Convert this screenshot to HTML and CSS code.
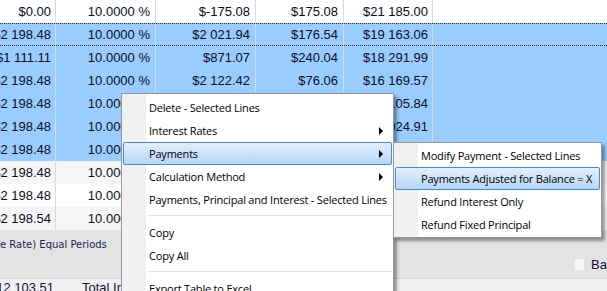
FILE: index.html
```html
<!DOCTYPE html>
<html lang="en">
<head>
    <meta charset="UTF-8">
    <title>Loan Schedule</title>
    <link rel="stylesheet" href="styles.css">
</head>
<body>
    <div class="grid">
        <div class="row"><div class="c c1">$0.00</div><div class="c c2">10.0000 %</div><div class="c c3">$-175.08</div><div class="c c4">$175.08</div><div class="c c5">$21 185.00</div><div class="c fill"></div></div>
        <div class="row sel focus"><div class="c c1">$2 198.48</div><div class="c c2">10.0000 %</div><div class="c c3">$2 021.94</div><div class="c c4">$176.54</div><div class="c c5">$19 163.06</div><div class="c fill"></div></div>
        <div class="row sel"><div class="c c1">$1 111.11</div><div class="c c2">10.0000 %</div><div class="c c3">$871.07</div><div class="c c4">$240.04</div><div class="c c5">$18 291.99</div><div class="c fill"></div></div>
        <div class="row sel"><div class="c c1">$2 198.48</div><div class="c c2">10.0000 %</div><div class="c c3">$2 122.42</div><div class="c c4">$76.06</div><div class="c c5">$16 169.57</div><div class="c fill"></div></div>
        <div class="row sel"><div class="c c1">$2 198.48</div><div class="c c2">10.0000 %</div><div class="c c3">$2 063.73</div><div class="c c4">$134.75</div><div class="c c5">$14 105.84</div><div class="c fill"></div></div>
        <div class="row sel"><div class="c c1">$2 198.48</div><div class="c c2">10.0000 %</div><div class="c c3">$2 080.93</div><div class="c c4">$117.55</div><div class="c c5">$12 024.91</div><div class="c fill"></div></div>
        <div class="row sel"><div class="c c1">$2 198.48</div><div class="c c2">10.0000 %</div><div class="c c3">$2 098.27</div><div class="c c4">$100.21</div><div class="c c5">$9 926.64</div><div class="c fill"></div></div>
        <div class="row"><div class="c c1">$2 198.48</div><div class="c c2">10.0000 %</div><div class="c c3">$2 115.76</div><div class="c c4">$82.72</div><div class="c c5">$7 810.88</div><div class="c fill"></div></div>
        <div class="row"><div class="c c1">$2 198.48</div><div class="c c2">10.0000 %</div><div class="c c3">$2 133.39</div><div class="c c4">$65.09</div><div class="c c5">$5 677.49</div><div class="c fill"></div></div>
        <div class="row"><div class="c c1">$2 198.54</div><div class="c c2">10.0000 %</div><div class="c c3">$2 151.23</div><div class="c c4">$47.31</div><div class="c c5">$3 526.26</div><div class="c fill"></div></div>
    </div>

    <div class="summary">
        <span class="method">e Rate) Equal Periods</span>
        <label class="check"><span class="box"></span>Ba</label>
    </div>
    <div class="totals">
        <span class="total-val">$12 103.51</span>
        <span class="total-lbl">Total Int</span>
    </div>

    <div class="menu main-menu">
        <div class="item">Delete - Selected Lines</div>
        <div class="item">Interest Rates<span class="arrow"></span></div>
        <div class="item hot">Payments<span class="arrow"></span></div>
        <div class="item">Calculation Method<span class="arrow"></span></div>
        <div class="item">Payments, Principal and Interest - Selected Lines</div>
        <div class="sep"></div>
        <div class="item">Copy</div>
        <div class="item">Copy All</div>
        <div class="sep"></div>
        <div class="item">Export Table to Excel...</div>
    </div>

    <div class="menu sub-menu">
        <div class="item">Modify Payment - Selected Lines</div>
        <div class="item hot">Payments Adjusted for Balance = X</div>
        <div class="item">Refund Interest Only</div>
        <div class="item">Refund Fixed Principal</div>
    </div>
</body>
</html>
```

FILE: styles.css
```css
body {
    margin: 0;
    width: 607px;
    height: 291px;
    overflow: hidden;
    position: relative;
    font-family: "Liberation Sans", Arial, sans-serif;
    font-size: 13px;
    color: #0c0c1e;
    background: #f0f0f0;
}
.grid {
    background: #fff;
}
.row {
    display: flex;
    height: 23px;
    line-height: 23px;
}
.row:nth-child(even) {
    background: #f5f5f5;
}
.row.sel {
    background: #99ccff;
}
.row.focus {
    border-top: 1px dotted #3a2a1a;
    border-bottom: 1px dotted #3a2a1a;
    height: 21px;
    line-height: 21px;
}
.c {
    box-sizing: border-box;
    flex: none;
    display: flex;
    justify-content: flex-end;
    padding-right: 5px;
    border-right: 1px solid #d9d9d9;
    white-space: nowrap;
}
.c1 { width: 56px; padding-right: 4px; }
.c2 { width: 100px; }
.c3 { width: 100px; }
.c4 { width: 88px; }
.c5 { width: 89px; padding-right: 4px; }
.fill {
    flex: 1;
    border-right: 0;
}
.summary {
    display: flex;
    justify-content: space-between;
    height: 48px;
    background: #e3e3e3;
}
.method {
    font-family: "DejaVu Sans", Verdana, sans-serif;
    font-size: 10px;
    color: #23235a;
    padding-top: 8px;
    line-height: 14px;
    white-space: nowrap;
}
.check {
    align-self: flex-end;
    display: flex;
    align-items: center;
    gap: 7px;
    padding-bottom: 6px;
    color: #10103a;
    white-space: nowrap;
    width: 32px;
}
.box {
    width: 11px;
    height: 11px;
    background: #f8f7f3;
}
.totals {
    display: flex;
    gap: 28px;
    border-top: 1px solid #d8d8d8;
    background: #f0f0f0;
    line-height: 16px;
    padding-top: 1px;
    color: #10103a;
    white-space: nowrap;
}
.total-val {
    width: 54px;
    display: flex;
    justify-content: flex-end;
}
.menu {
    position: absolute;
    box-sizing: border-box;
    background: linear-gradient(to right, #f1f1f1 0, #f1f1f1 24px, #fff 24px);
    border: 1px solid #979797;
    box-shadow: 3px 3px 3px rgba(0, 0, 0, 0.38);
    font-family: "Open Sans", "Noto Sans", sans-serif;
    font-size: 11px;
    letter-spacing: -0.2px;
    color: #000;
}
.main-menu {
    left: 121px;
    top: 93px;
    width: 273px;
    padding: 2px 1px;
}
.sub-menu {
    left: 393px;
    top: 142px;
    width: 209px;
    padding: 1px 1px;
}
.item {
    display: flex;
    align-items: center;
    height: 23px;
    box-sizing: border-box;
    padding-left: 25px;
    border: 1px solid transparent;
    border-radius: 2px;
    white-space: nowrap;
}
.item.hot {
    border-color: #3d8ee0;
    background: linear-gradient(#e3effc, #b7d6f6);
}
.arrow {
    margin-left: auto;
    margin-right: 8px;
    width: 0;
    height: 0;
    border-left: 4px solid #000;
    border-top: 4px solid transparent;
    border-bottom: 4px solid transparent;
}
.sep {
    height: 10px;
    margin-left: 26px;
    background: linear-gradient(transparent 4px, #e0e0e0 4px, #e0e0e0 5px, #fff 5px);
}
```
